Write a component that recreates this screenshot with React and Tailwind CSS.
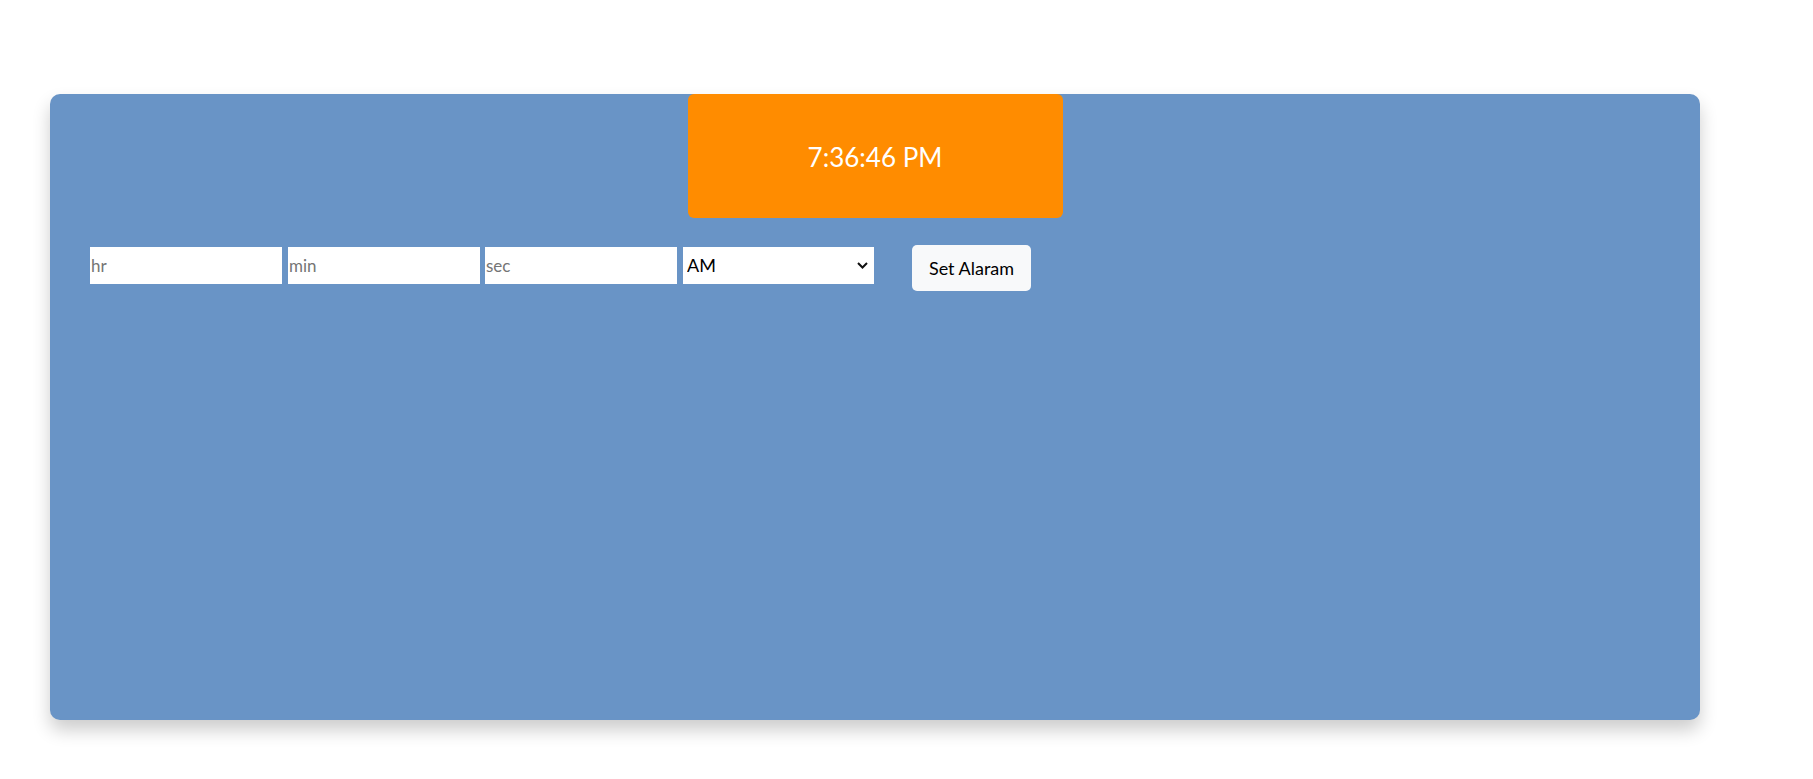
import React, { useState } from "react";

const font = { fontFamily: "Lato, 'Open Sans', sans-serif" };

const App = () => {
  const [hr, setHr] = useState("");
  const [min, setMin] = useState("");
  const [sec, setSec] = useState("");
  const [ampm, setAmpm] = useState("AM");

  const inputCls =
    "w-[192px] h-[37px] bg-white border-0 outline-none px-[1px] text-[17px] text-black placeholder:text-[#757575]";

  return (
    <div className="min-h-[779px] bg-white pt-[94px] pl-[50px]" style={font}>
      <div className="w-[1650px] h-[626px] bg-[#6994c6] rounded-[10px] shadow-[0_10px_18px_rgba(0,0,0,0.2)] flex flex-col">
        <div className="mx-auto w-[375px] h-[124px] bg-[#ff8c00] rounded-[6px] flex items-center justify-center text-white text-[26px] pt-[2px]">
          7:36:46 PM
        </div>

        <div className="flex items-start pl-[40px] mt-[26px]">
          <input
            className={inputCls + " mt-[3px]"}
            placeholder="hr"
            value={hr}
            onChange={(e) => setHr(e.target.value)}
          />
          <input
            className={inputCls + " mt-[3px] ml-[6px]"}
            placeholder="min"
            value={min}
            onChange={(e) => setMin(e.target.value)}
          />
          <input
            className={inputCls + " mt-[3px] ml-[5px]"}
            placeholder="sec"
            value={sec}
            onChange={(e) => setSec(e.target.value)}
          />
          <div className="relative mt-[3px] ml-[6px]">
            <select
              value={ampm}
              onChange={(e) => setAmpm(e.target.value)}
              className="appearance-none w-[191px] h-[37px] bg-white border-0 outline-none pl-[4px] text-[18px] text-black"
            >
              <option>AM</option>
              <option>PM</option>
            </select>
            <svg
              className="absolute right-[6px] top-[15px] pointer-events-none"
              width="11"
              height="7"
              viewBox="0 0 11 7"
            >
              <path d="M1 1l4.5 4.5L10 1" fill="none" stroke="#111" strokeWidth="2" />
            </svg>
          </div>
          <button className="ml-[38px] mt-[1px] w-[119px] h-[46px] bg-[#f8f9fa] rounded-[5px] text-[18px] text-black">
            Set Alaram
          </button>
        </div>
      </div>
    </div>
  );
};

export default App;
